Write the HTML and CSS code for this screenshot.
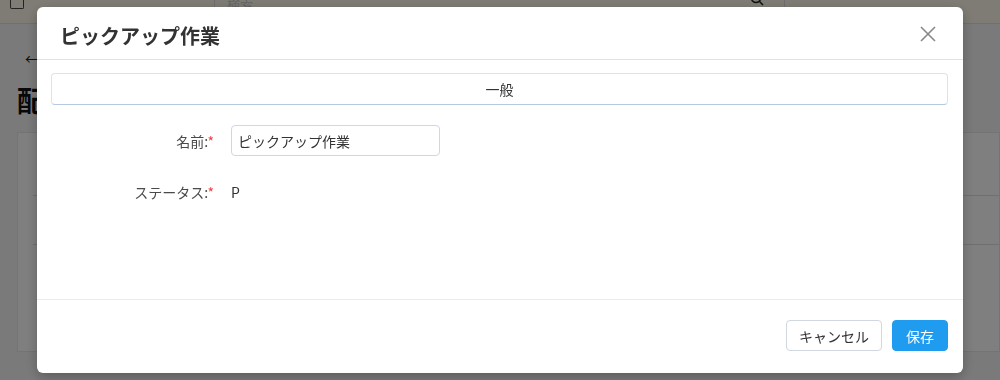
FILE: index.html
```html
<!DOCTYPE html>
<html lang="ja">
<head>
    <meta charset="UTF-8">
    <title>ピックアップ作業</title>
    <link rel="stylesheet" href="styles.css">
</head>
<body>
    <!-- 背景のページ -->
    <div class="topbar">
        <div class="topbar-icon"></div>
        <div class="search">
            <span class="search-ph">検索</span>
            <svg class="search-icon" width="14" height="14" viewBox="0 0 14 14"><circle cx="6" cy="6" r="4.5" fill="none" stroke="#222" stroke-width="1.6"/><path d="M9.3 9.3L13 13" stroke="#222" stroke-width="1.6"/></svg>
        </div>
    </div>
    <div class="page">
        <div class="back">&#8592;</div>
        <div class="page-title">配</div>
        <div class="card">
            <div class="card-row"></div>
            <div class="card-row"></div>
        </div>
    </div>

    <div class="overlay"></div>

    <!-- モーダル -->
    <div class="modal">
        <div class="modal-header">
            <h2 class="modal-title">ピックアップ作業</h2>
            <svg class="modal-close" width="16" height="16" viewBox="0 0 16 16"><path d="M1 1L15 15M15 1L1 15" stroke="#888" stroke-width="1.6"/></svg>
        </div>
        <div class="modal-body">
            <div class="tab">一般</div>
            <div class="form-row">
                <label class="form-label">名前:<span class="req">*</span></label>
                <input class="form-input" type="text" value="ピックアップ作業">
            </div>
            <div class="form-row">
                <label class="form-label">ステータス:<span class="req">*</span></label>
                <span class="form-value">P</span>
            </div>
        </div>
        <div class="modal-footer">
            <button class="btn">キャンセル</button>
            <button class="btn btn-primary">保存</button>
        </div>
    </div>
</body>
</html>
```

FILE: styles.css
```css
:root {
    --bleu: #1f9bf0;
    --texte: #333333;
    --bord: #dde3ea;
}

body {
    margin: 0;
    font-family: "Noto Sans CJK JP", "Noto Sans", sans-serif;
    background: #f5f5f5;
    color: var(--texte);
    overflow: hidden;
    height: 380px;
}

/* Page en arrière-plan */
.topbar {
    height: 23px;
    background: #fff8ea;
    display: flex;
    align-items: flex-start;
    border-bottom: 1px solid #e6e0d0;
    overflow: hidden;
}

.topbar-icon {
    width: 12px;
    height: 8px;
    margin: 0 0 0 10px;
    border: 1.5px solid #444;
    border-top: none;
    border-radius: 0 0 2px 2px;
}

.search {
    margin-left: 190px;
    width: 571px;
    height: 22px;
    border-left: 1px solid #ddd;
    border-right: 1px solid #ddd;
    display: flex;
    align-items: flex-start;
    justify-content: space-between;
    padding: 0 20px 0 12px;
    box-sizing: border-box;
}

.search-ph {
    color: #ccc;
    font-size: 13px;
    line-height: 8px;
}

.search-icon {
    margin-top: -8px;
}

.page {
    padding: 24px 0 0 17px;
}

.back {
    font-size: 14px;
    color: #222;
    margin-left: 8px;
    line-height: 20px;
}

.page-title {
    font-size: 28px;
    font-weight: bold;
    color: #111;
    margin-top: 14px;
    line-height: 36px;
}

.card {
    margin-top: 14px;
    background: #ffffff;
    border: 1px solid #e8e8e8;
    height: 220px;
    padding-top: 62px;
    padding-left: 15px;
    box-sizing: border-box;
}

.card-row {
    height: 48px;
    border-top: 1px solid #e0e0e0;
}

.overlay {
    position: fixed;
    inset: 0;
    background: rgba(0, 0, 0, 0.5);
}

/* Modale */
.modal {
    position: fixed;
    left: 37px;
    top: 7px;
    width: 926px;
    height: 366px;
    background: #ffffff;
    border-radius: 6px;
    box-shadow: 0 4px 12px rgba(0, 0, 0, 0.25);
    display: flex;
    flex-direction: column;
}

.modal-header {
    height: 52px;
    border-bottom: 1px solid var(--bord);
    display: flex;
    align-items: center;
    justify-content: space-between;
    padding: 0 27px 0 23px;
}

.modal-title {
    margin: 0;
    font-size: 20px;
    font-weight: bold;
    color: var(--texte);
    position: relative;
    top: 2px;
}

.modal-close {
    position: relative;
    top: 1px;
}

.modal-body {
    flex: 1;
    padding: 13px 15px 0 14px;
}

.tab {
    height: 30px;
    border: 1px solid #dbe3ee;
    border-bottom: 1.5px solid #b5c9e2;
    border-radius: 4px;
    display: flex;
    align-items: center;
    justify-content: center;
    font-size: 14px;
    color: var(--texte);
}

/* Formulaire */
.form-row {
    display: flex;
    align-items: center;
    height: 31px;
    margin-top: 20px;
}

.form-label {
    width: 163px;
    text-align: right;
    font-size: 14px;
    color: #4a4a4a;
    margin-right: 17px;
}

.req {
    color: #f04040;
}

.form-input {
    width: 209px;
    height: 31px;
    box-sizing: border-box;
    border: 1px solid #c9d9ec;
    border-radius: 4px;
    padding: 0 6px;
    font-family: inherit;
    font-size: 14px;
    color: var(--texte);
    outline: none;
}

.form-value {
    font-size: 14px;
    color: var(--texte);
}

.modal-footer {
    border-top: 1px solid #e8ecf0;
    height: 74px;
    display: flex;
    align-items: center;
    justify-content: flex-end;
    gap: 10px;
    padding: 0 15px 2px 0;
    box-sizing: border-box;
}

.btn {
    height: 31px;
    padding: 0 12px;
    border: 1px solid #d0d7e0;
    border-radius: 4px;
    background: #ffffff;
    font-family: inherit;
    font-size: 14px;
    color: var(--texte);
    cursor: pointer;
}

.btn-primary {
    background: var(--bleu);
    border-color: var(--bleu);
    color: #ffffff;
    padding: 0 13px;
}
```
